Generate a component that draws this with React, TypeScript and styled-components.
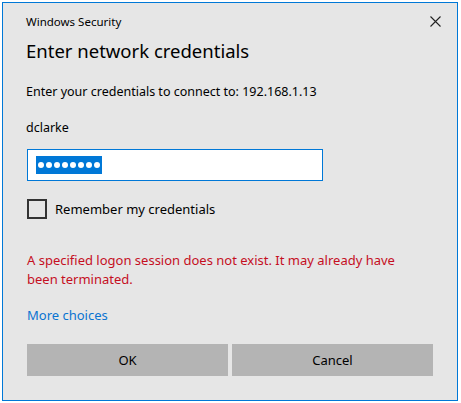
import * as React from "react";
import styled, { createGlobalStyle } from "styled-components";

const GlobalStyle = createGlobalStyle`
  html, body {
    margin: 0;
    padding: 0;
    background: #ffffff;
  }
  body {
    font-family: "Segoe UI", "Noto Sans", "Open Sans", sans-serif;
    color: #000000;
  }
`;

const Screen = styled.div`
  width: 461px;
  height: 403px;
  padding: 2px 0 0 2px;
  box-sizing: border-box;
  overflow: hidden;
`;

const Dialog = styled.div`
  width: 456px;
  height: 399px;
  box-sizing: border-box;
  border: 1px solid #0078d7;
  background: #e6e6e6;
  display: flex;
  flex-direction: column;
  padding: 0 23px;
`;

const TitleBar = styled.div`
  display: flex;
  align-items: center;
  justify-content: space-between;
  height: 34px;
  padding-top: 2px;
  box-sizing: border-box;
`;

const Caption = styled.span`
  font-size: 11.5px;
  color: #000;
`;

const Close = styled.button`
  width: 16px;
  height: 16px;
  margin-right: -9px;
  padding: 0;
  border: none;
  background: transparent;
  display: flex;
  align-items: center;
  justify-content: center;
`;

const Heading = styled.h1`
  margin: 0;
  font-size: 18.5px;
  font-weight: 400;
  line-height: 28px;
`;

const Line = styled.div<{ $top: number; $size: number }>`
  margin-top: ${(p) => p.$top}px;
  font-size: ${(p) => p.$size}px;
  line-height: 18px;
`;

const Field = styled.div`
  margin-top: 12px;
  margin-left: 1px;
  width: 296px;
  height: 32px;
  box-sizing: border-box;
  border: 1px solid #0078d7;
  background: #ffffff;
  display: flex;
  align-items: center;
  padding-left: 8px;
`;

const Selected = styled.span`
  background: #0078d7;
  height: 18px;
  display: flex;
  align-items: center;
  padding: 0 1px;
`;

const Dot = styled.span`
  width: 6px;
  height: 6px;
  margin: 0 1px;
  border-radius: 50%;
  background: #ffffff;
`;

const CheckRow = styled.label`
  margin-top: 18px;
  margin-left: 1px;
  display: flex;
  align-items: center;
  gap: 8px;
  font-size: 13px;
`;

const Box = styled.span`
  width: 20px;
  height: 20px;
  box-sizing: border-box;
  border: 2px solid #333333;
`;

const ErrorText = styled.p`
  margin: 32px 0 0 1px;
  color: #c50f1f;
  font-size: 13px;
  line-height: 19px;
  width: 390px;
`;

const Link = styled.a`
  margin: 17px 0 0 1px;
  color: #0a74d1;
  font-size: 13px;
  line-height: 18px;
  text-decoration: none;
`;

const Buttons = styled.div`
  margin-top: 20px;
  margin-left: 1px;
  display: flex;
  gap: 4px;
`;

const Button = styled.button`
  width: 201px;
  height: 32px;
  border: none;
  background: #b4b4b4;
  font-family: inherit;
  font-size: 13px;
  color: #000;
`;

export default function App() {
  return (
    <>
      <GlobalStyle />
      <Screen>
        <Dialog>
          <TitleBar>
            <Caption>Windows Security</Caption>
            <Close aria-label="Close">
              <svg width="11" height="11" viewBox="0 0 11 11">
                <path d="M0.5 0.5 L10.5 10.5 M10.5 0.5 L0.5 10.5" stroke="#222" strokeWidth="1.1" />
              </svg>
            </Close>
          </TitleBar>
          <Heading>Enter network credentials</Heading>
          <Line $top={18} $size={12.5}>
            Enter your credentials to connect to: 192.168.1.13
          </Line>
          <Line $top={18} $size={12.5}>
            dclarke
          </Line>
          <Field>
            <Selected>
              {Array.from({ length: 8 }).map((_, i) => (
                <Dot key={i} />
              ))}
            </Selected>
          </Field>
          <CheckRow>
            <Box />
            Remember my credentials
          </CheckRow>
          <ErrorText>
            A specified logon session does not exist. It may already have been terminated.
          </ErrorText>
          <Link href="#">More choices</Link>
          <Buttons>
            <Button>OK</Button>
            <Button>Cancel</Button>
          </Buttons>
        </Dialog>
      </Screen>
    </>
  );
}
